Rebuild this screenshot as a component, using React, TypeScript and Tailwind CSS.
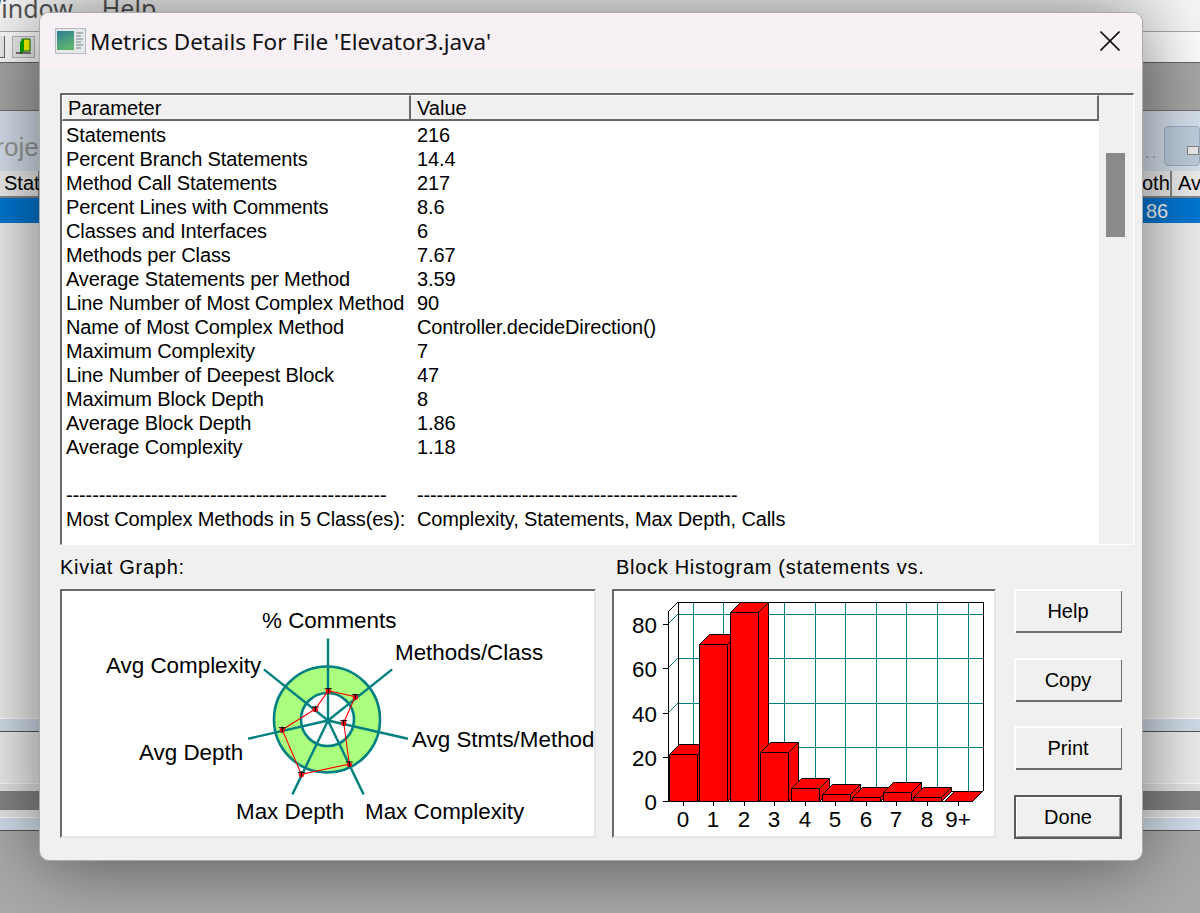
const dashes = '-------------------------------------------------'

const rows = [
  ['Statements', '216'],
  ['Percent Branch Statements', '14.4'],
  ['Method Call Statements', '217'],
  ['Percent Lines with Comments', '8.6'],
  ['Classes and Interfaces', '6'],
  ['Methods per Class', '7.67'],
  ['Average Statements per Method', '3.59'],
  ['Line Number of Most Complex Method', '90'],
  ['Name of Most Complex Method', 'Controller.decideDirection()'],
  ['Maximum Complexity', '7'],
  ['Line Number of Deepest Block', '47'],
  ['Maximum Block Depth', '8'],
  ['Average Block Depth', '1.86'],
  ['Average Complexity', '1.18'],
  ['\u00a0', '\u00a0'],
  [dashes, dashes],
  ['Most Complex Methods in 5 Class(es):', 'Complexity, Statements, Max Depth, Calls'],
]

const kiviatLabels = [
  { t: '% Comments', x: 262, y: 628 },
  { t: 'Methods/Class', x: 395, y: 660 },
  { t: 'Avg Stmts/Method', x: 412, y: 747 },
  { t: 'Max Complexity', x: 365, y: 819 },
  { t: 'Max Depth', x: 236, y: 819 },
  { t: 'Avg Depth', x: 139, y: 760 },
  { t: 'Avg Complexity', x: 106, y: 673 },
]

const kiviatPoints = [
  [328.3, 690.7], [355.3, 696.7], [343.7, 722.7], [349.3, 764], [301.3, 774.3], [282.3, 729.7], [315.3, 709],
]

const bars = [
  { x: 669, top: 754 }, { x: 699, top: 644 }, { x: 730, top: 612 }, { x: 760, top: 752 }, { x: 791, top: 788 },
  { x: 822, top: 794 }, { x: 852, top: 797 }, { x: 883, top: 792 }, { x: 913, top: 797 }, { x: 944, top: 801 },
]

function Kiviat() {
  const cx = 328
  const cy = 720.5
  return (
    <svg width="532" height="245" viewBox="62 591 532 245" className="block">
      <circle cx="327" cy="719.5" r="53" fill="#aaff7f" stroke="#008080" strokeWidth="2.6" />
      <circle cx="327.5" cy="719.5" r="26.5" fill="#fff" stroke="#008080" strokeWidth="2.6" />
      {[0, 1, 2, 3, 4, 5, 6].map((i) => {
        const a = (i * 2 * Math.PI) / 7
        return (
          <line key={i} x1={cx} y1={cy} x2={cx + 82 * Math.sin(a)} y2={cy - 82 * Math.cos(a)} stroke="#008080" strokeWidth="2.4" />
        )
      })}
      <polygon points={kiviatPoints.map((p) => p.join(',')).join(' ')} fill="none" stroke="#f00" strokeWidth="1.1" />
      {kiviatPoints.map((p, i) => (
        <g key={i}>
          <circle cx={p[0]} cy={p[1] + 0.5} r="2.6" fill="#f00" />
          <path d={`M${p[0] - 3.5} ${p[1] - 2}H${p[0] + 3.5}M${p[0]} ${p[1] - 3}V${p[1] + 3}`} stroke="#000" strokeWidth="1" />
        </g>
      ))}
      {kiviatLabels.map((l) => (
        <text key={l.t} x={l.x} y={l.y} fontSize="22.4" fill="#000" fontFamily="Liberation Sans, Arial, sans-serif">
          {l.t}
        </text>
      ))}
    </svg>
  )
}

function Histogram() {
  const back = [614, 658, 703, 747]
  const front = [624, 668, 713, 757]
  const vert = [693, 723, 753, 784, 815, 845, 876, 906, 937, 968]
  const tickX = [683, 713, 744, 774, 805, 835, 866, 896, 927, 958]
  const xLabels = ['0', '1', '2', '3', '4', '5', '6', '7', '8', '9+']
  const yLabels = [['80', 633], ['60', 677], ['40', 722], ['20', 766], ['0', 810]]
  return (
    <svg width="380" height="245" viewBox="614 591 380 245" className="block" shapeRendering="crispEdges">
      {back.map((y) => (
        <line key={y} x1="678" x2="983" y1={y} y2={y} stroke="#008080" />
      ))}
      {vert.map((x) => (
        <line key={x} x1={x} x2={x} y1="602" y2="791" stroke="#008080" />
      ))}
      <g shapeRendering="auto">
        {back.map((y, i) => (
          <line key={y} x1="668" x2="678" y1={front[i]} y2={y} stroke="#008080" />
        ))}
        <path d="M668 612L678 602M668 801L678 791M973 801L983 791" stroke="#000" fill="none" />
      </g>
      <path d="M668.5 612V801.5H973M678.5 602V791M678 602.5H983.5V791M678 791.5H983" stroke="#000" fill="none" />
      {bars.map((b) => (
        <g key={b.x} shapeRendering="auto">
          <path
            d={`M${b.x + 0.5} ${b.top + 0.5}L${b.x + 10.5} ${b.top - 9.5}H${b.x + 38.5}V${791.5}L${b.x + 28.5} 801.5H${b.x + 0.5}Z`}
            fill="#f00"
            stroke="#000"
          />
          <path
            d={`M${b.x + 0.5} ${b.top + 0.5}H${b.x + 28.5}V801.5M${b.x + 28.5} ${b.top + 0.5}L${b.x + 38.5} ${b.top - 9.5}`}
            fill="none"
            stroke="#000"
          />
        </g>
      ))}
      {tickX.map((x) => (
        <line key={x} x1={x} x2={x} y1="801" y2="806" stroke="#000" />
      ))}
      {front.concat(801).map((y) => (
        <line key={y} x1="663" x2="668" y1={y} y2={y} stroke="#000" />
      ))}
      <g fontSize="22.4" fill="#000" fontFamily="Liberation Sans, Arial, sans-serif" shapeRendering="auto">
        {xLabels.map((l, i) => (
          <text key={l} x={tickX[i]} y="827" textAnchor="middle">
            {l}
          </text>
        ))}
        {yLabels.map(([l, y]) => (
          <text key={l} x="657" y={y} textAnchor="end">
            {l}
          </text>
        ))}
      </g>
    </svg>
  )
}

function DialogButton({ label, isDefault }: { label: string; isDefault?: boolean }) {
  return (
    <button
      className={`w-[108px] h-[44px] bg-[#f0f0f0] text-[20px] text-black ${
        isDefault
          ? 'border-2 border-[#5a5a5a] shadow-[inset_1px_1px_0_#fff,inset_-1px_-1px_0_#999]'
          : 'shadow-[inset_2px_2px_0_#fff,inset_-1px_-2px_0_#6e6e6e]'
      }`}
    >
      {label}
    </button>
  )
}

function AppIcon() {
  return (
    <svg width="31" height="26" viewBox="0 0 31 26" className="shrink-0">
      <rect x="0.5" y="0.5" width="30" height="25" fill="#e4e8ea" stroke="#b4bcc0" />
      <defs>
        <linearGradient id="ico" x1="0" y1="0" x2="0.4" y2="1">
          <stop offset="0" stopColor="#2a7f95" />
          <stop offset="1" stopColor="#5fb26e" />
        </linearGradient>
      </defs>
      <rect x="2" y="3" width="17" height="19" fill="url(#ico)" />
      <path d="M21 5h7M21 8h5M21 11h7M21 14h5M21 17h7M21 20h5" stroke="#9aa4a8" strokeWidth="1.4" />
    </svg>
  )
}

export default function App() {
  return (
    <div
      className="relative w-[1200px] h-[913px] overflow-hidden bg-[#aaaaaa]"
      style={{ fontFamily: 'Liberation Sans, Arial, sans-serif' }}
    >
      {/* window behind the dialog */}
      <div className="flex flex-col">
        <div className="h-[31px] bg-[#f8f8f8] overflow-hidden text-[25px] text-[#555] whitespace-nowrap" style={{ fontFamily: 'Noto Sans, sans-serif' }}>
          <div className="flex gap-[29px] ml-[-22px] mt-[-12px] leading-[40px]">
            <span>Window</span>
            <span>Help</span>
          </div>
        </div>
        <div className="h-[32px] bg-white border-t border-t-[#aaa] flex items-center gap-[7px] border-b border-b-[#666]">
          <div className="w-[5px] h-[22px] bg-[#eee] border-r border-b border-[#666]" />
          <div className="w-[23px] h-[22px] bg-[#eee] border border-[#bbb] flex items-center justify-center">
            <svg width="18" height="18" viewBox="0 0 18 18">
              <path d="M7 1h8v12H7z" fill="#ff0" stroke="#060" />
              <path d="M5 4L9 1V13L5 16z" fill="#0a0" />
              <path d="M1 15h15" stroke="#000" />
            </svg>
          </div>
        </div>
        <div className="h-[48px] bg-[#a8a8a8] border-b border-b-[#777]" />
        <div className="h-[60px] bg-[#d8e2ee] flex justify-between">
          <span className="text-[26px] text-[#9a9a9a] ml-[-22px] mt-[21px] leading-[30px]">Proje</span>
          <div className="flex items-end h-full">
            <span className="text-[16px] tracking-[2px] text-[#999] mr-[6px] mb-[6px]">...</span>
            <div className="w-[36px] h-[40px] bg-[#c0cfe0] border border-[#9fb0c4] rounded-sm mb-[5px] flex items-center justify-end">
              <div className="w-[12px] h-[9px] bg-[#eee] border border-[#888] mt-[8px]" />
            </div>
          </div>
        </div>
        <div className="h-[27px] bg-[#f0f0f0] flex justify-between text-[20px] text-black leading-[24px]">
          <span className="w-[40px] pl-[4px] border-r-2 border-b-2 border-[#888]">Stat</span>
          <div className="flex">
            <span className="pr-[2px] border-r-2 border-b-2 border-[#888] w-[30px] overflow-hidden">oth</span>
            <span className="pl-[6px] w-[28px] border-b-2 border-[#888]">Av</span>
          </div>
        </div>
        <div className="h-[25px] bg-[#0078d4] text-white text-[20px] leading-[27px] flex justify-end">
          <span className="w-[54px]">86</span>
        </div>
        <div className="h-[496px] bg-[#f0f0f0] border-b border-b-white" />
        <div className="h-[13px] bg-[#d4e0ed] border-b border-b-[#555]" />
        <div className="h-[52px] bg-[#f0f0f0] border-b border-b-white" />
        <div className="h-[7px] bg-[#e8e8e8]" />
        <div className="h-[19px] bg-[#868686]" />
        <div className="h-[8px] bg-[#e8e8e8] border-b border-b-white" />
        <div className="h-[13px] bg-[#d4e0ed] border-b border-b-[#555]" />
      </div>

      {/* metrics dialog */}
      <div className="absolute left-[39px] top-[12px] w-[1104px] h-[849px] rounded-[10px] overflow-hidden bg-[#f0f0f0] border border-[#aaa] shadow-[0_0_80px_rgba(0,0,0,0.55)] flex flex-col">
        <div className="h-[56px] bg-[#f7f0f5] flex items-center pl-[15px] gap-[4px] shrink-0">
          <AppIcon />
          <span className="text-[22.5px] text-[#111] whitespace-nowrap mt-[2px]" style={{ fontFamily: 'Noto Sans, sans-serif' }}>
            Metrics Details For File 'Elevator3.java'
          </span>
          <svg width="20" height="20" viewBox="0 0 20 20" className="ml-auto mr-[22px]">
            <path d="M0.5 0.5L19.5 19.5M19.5 0.5L0.5 19.5" stroke="#111" strokeWidth="1.6" fill="none" />
          </svg>
        </div>

        <div className="ml-[20px] mt-[24px] w-[1074px] h-[452px] shrink-0 border-t-2 border-l-2 border-t-[#696969] border-l-[#696969] border-r border-b border-r-white border-b-white flex text-[20px] text-black">
          <div className="w-[1037px] flex flex-col">
            <div className="h-[26px] flex shrink-0 leading-[25px]">
              <div className="w-[349px] pl-[5px] bg-[#f0f0f0] border-t border-l border-t-white border-l-white border-r-2 border-b-2 border-r-[#696969] border-b-[#696969]">Parameter</div>
              <div className="flex-1 pl-[6px] bg-[#f0f0f0] border-t border-t-white border-r-2 border-b-2 border-r-[#696969] border-b-[#696969]">Value</div>
            </div>
            <div className="flex-1 bg-white pt-[2px] tracking-[-0.12px]">
              {rows.map((r, i) => (
                <div key={i} className="flex h-[24px] leading-[24px] whitespace-nowrap">
                  <div className="w-[355px] pl-[4px]">{r[0]}</div>
                  <div>{r[1]}</div>
                </div>
              ))}
            </div>
          </div>
          <div className="flex-1 bg-[#f0f0f0] pt-[58px] pl-[7px]">
            <div className="w-[19px] h-[84px] bg-[#8a8a8a]" />
          </div>
        </div>

        <div className="ml-[20px] mt-[10px] flex gap-[16px] items-start">
          <div className="w-[536px]">
            <div className="h-[24px] leading-[24px] text-[20px] tracking-[0.7px] text-black">Kiviat Graph:</div>
            <div className="mt-[10px] w-[536px] h-[249px] bg-white border-t-2 border-l-2 border-t-[#696969] border-l-[#696969] border-r-2 border-b-2 border-r-[#e6e6e6] border-b-[#e6e6e6]">
              <Kiviat />
            </div>
          </div>
          <div className="w-[384px]">
            <div className="h-[24px] leading-[24px] text-[20px] tracking-[0.7px] text-black pl-[4px] whitespace-nowrap">Block Histogram (statements vs.</div>
            <div className="mt-[10px] w-[384px] h-[249px] bg-white border-t-2 border-l-2 border-t-[#696969] border-l-[#696969] border-r-2 border-b-2 border-r-[#e6e6e6] border-b-[#e6e6e6]">
              <Histogram />
            </div>
          </div>
          <div className="ml-[2px] mt-[34px] flex flex-col gap-[24.5px]">
            <DialogButton label="Help" />
            <DialogButton label="Copy" />
            <DialogButton label="Print" />
            <DialogButton label="Done" isDefault />
          </div>
        </div>
      </div>
    </div>
  )
}
